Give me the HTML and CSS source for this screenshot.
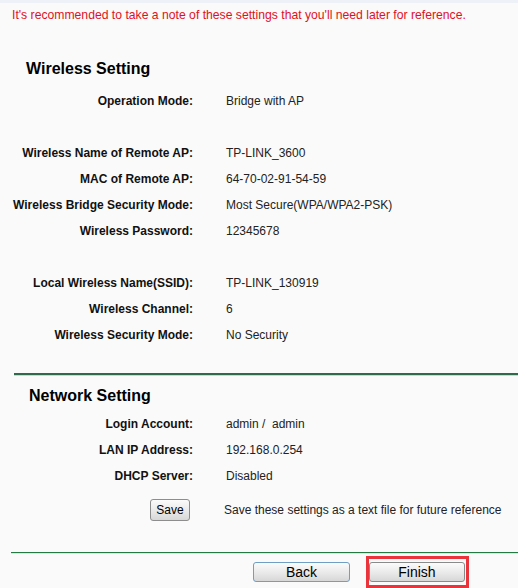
FILE: index.html
```html
<!DOCTYPE html>
<html lang="en">
<head>
<meta charset="utf-8">
<title>Quick Setup - Finish</title>
<link rel="stylesheet" href="styles.css">
</head>
<body>
<div class="topbar"></div>
<p class="notice">It's recommended to take a note of these settings that you'll need later for reference.</p>

<section class="sec sec-wireless">
  <h2 class="sec-title">Wireless Setting</h2>
  <div class="row"><span class="lbl">Operation Mode:</span><span class="val">Bridge with AP</span></div>
  <div class="row"></div>
  <div class="row"><span class="lbl">Wireless Name of Remote AP:</span><span class="val">TP-LINK_3600</span></div>
  <div class="row"><span class="lbl">MAC of Remote AP:</span><span class="val">64-70-02-91-54-59</span></div>
  <div class="row"><span class="lbl">Wireless Bridge Security Mode:</span><span class="val">Most Secure(WPA/WPA2-PSK)</span></div>
  <div class="row"><span class="lbl">Wireless Password:</span><span class="val">12345678</span></div>
  <div class="row"></div>
  <div class="row"><span class="lbl">Local Wireless Name(SSID):</span><span class="val">TP-LINK_130919</span></div>
  <div class="row"><span class="lbl">Wireless Channel:</span><span class="val">6</span></div>
  <div class="row"><span class="lbl">Wireless Security Mode:</span><span class="val">No Security</span></div>
</section>

<div class="rule rule-top"></div>

<section class="sec sec-network">
  <h2 class="sec-title">Network Setting</h2>
  <div class="row"><span class="lbl">Login Account:</span><span class="val">admin /&nbsp; admin</span></div>
  <div class="row"><span class="lbl">LAN IP Address:</span><span class="val">192.168.0.254</span></div>
  <div class="row"><span class="lbl">DHCP Server:</span><span class="val">Disabled</span></div>
  <div class="row save-row"><span class="lbl"><button class="btn btn-save" type="button">Save</button></span><span class="val">Save these settings as a text file for future reference</span></div>
</section>

<div class="rule rule-bottom"></div>

<div class="actions">
  <button class="btn btn-nav btn-back" type="button">Back</button>
  <span class="highlight"><button class="btn btn-nav btn-finish" type="button">Finish</button></span>
</div>
</body>
</html>
```

FILE: styles.css
```css
html, body {
  margin: 0;
  padding: 0;
}
body {
  background: #fafafa;
  font-family: "Liberation Sans", Arial, sans-serif;
  color: #111;
  width: 518px;
  height: 588px;
  overflow: hidden;
}
.topbar {
  height: 3px;
  background: #eef2f8;
}
.notice {
  margin: 4px 0 0 12px;
  font-size: 12.2px;
  line-height: 16px;
  color: #e0101e;
}
.sec-title {
  margin: 0;
  font-size: 16px;
  line-height: 20px;
  font-weight: bold;
  color: #000;
}
.sec-wireless .sec-title {
  margin: 36px 0 9px 26px;
}
.sec-network .sec-title {
  margin: 10px 0 5px 29px;
}
.row {
  display: grid;
  grid-template-columns: 193px 1fr;
  column-gap: 33px;
  height: 26px;
  line-height: 26px;
  font-size: 12px;
  white-space: nowrap;
}
.lbl {
  text-align: right;
  font-weight: bold;
  color: #111;
}
.val {
  color: #222;
}
.save-row {
  margin-top: 8px;
}
.save-row .lbl {
  display: flex;
  justify-content: flex-end;
  align-items: center;
  padding-right: 3px;
}
.save-row .val {
  margin-left: -2px;
}
.rule-top {
  margin: 25px 0 0 14px;
  height: 2px;
  background: #2f6a4c;
  border-bottom: 1px solid #b8e4c6;
}
.rule-bottom {
  margin: 29px 0 0 11px;
  height: 1px;
  background: #237a42;
  border-bottom: 1px solid #d2ecd9;
}
.btn {
  font-family: "Liberation Sans", Arial, sans-serif;
  color: #000;
  padding: 0;
  margin: 0;
  background: linear-gradient(#fbfbfb, #e9e9e9 55%, #d7d7d7);
  cursor: pointer;
}
.btn-save {
  width: 40px;
  height: 22px;
  font-size: 12px;
  border: 1px solid #8d8d8d;
  border-radius: 3px;
}
.actions {
  display: flex;
  align-items: flex-start;
  margin-top: 2px;
  padding-left: 253px;
  gap: 16px;
}
.btn-nav {
  height: 20px;
  font-size: 14px;
  line-height: 18px;
  border-radius: 3px;
}
.btn-back {
  width: 97px;
  margin-top: 6px;
  border: 1px solid #6f9fc2;
}
.highlight {
  display: flex;
  border: 3px solid #e8343a;
  padding: 3px 1px 0 0;
  height: 23px;
}
.btn-finish {
  width: 96px;
  border: 1px solid #8a8a8a;
}
```
